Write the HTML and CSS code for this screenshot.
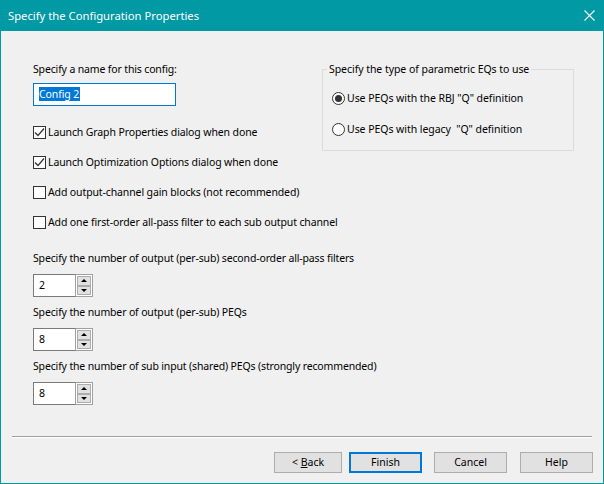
FILE: index.html
```html
<!DOCTYPE html>
<html lang="en">
<head>
    <meta charset="UTF-8">
    <meta name="viewport" content="width=device-width, initial-scale=1.0">
    <title>Specify the Configuration Properties</title>
    <link rel="stylesheet" href="styles.css">
</head>
<body>
    <div class="window">
        <div class="titlebar">
            <span class="title">Specify the Configuration Properties</span>
            <svg class="close" width="11" height="11" viewBox="0 0 11 11">
                <path d="M0.5 0.5 L10.5 10.5 M10.5 0.5 L0.5 10.5" stroke="#fff" stroke-width="1.1" fill="none"/>
            </svg>
        </div>

        <div class="content">
            <div class="top">
                <div class="left">
                    <div class="label">Specify a name for this config:</div>
                    <div class="name-box"><span class="selected">Config 2</span></div>

                    <div class="checks">
                        <div class="check">
                            <span class="box"><svg width="11" height="11" viewBox="0 0 11 11"><path d="M1 5.5 L4 8.5 L10 1.5" stroke="#333" stroke-width="1.2" fill="none"/></svg></span>
                            Launch Graph Properties dialog when done
                        </div>
                        <div class="check">
                            <span class="box"><svg width="11" height="11" viewBox="0 0 11 11"><path d="M1 5.5 L4 8.5 L10 1.5" stroke="#333" stroke-width="1.2" fill="none"/></svg></span>
                            Launch Optimization Options dialog when done
                        </div>
                        <div class="check">
                            <span class="box"></span>
                            Add output-channel gain blocks (not recommended)
                        </div>
                        <div class="check">
                            <span class="box"></span>
                            Add one first-order all-pass filter to each sub output channel
                        </div>
                    </div>
                </div>

                <fieldset class="group">
                    <legend>Specify the type of parametric EQs to use</legend>
                    <div class="radio"><span class="circle on"></span>Use PEQs with the RBJ "Q" definition</div>
                    <div class="radio"><span class="circle"></span>Use PEQs with legacy&nbsp; "Q" definition</div>
                </fieldset>
            </div>

            <div class="spins">
                <div class="spin-block">
                    <div class="label">Specify the number of output (per-sub) second-order all-pass filters</div>
                    <div class="spinner">
                        <div class="spin-edit">2</div>
                        <div class="spin-btns">
                            <span class="spin-btn"><span class="arrow up"></span></span>
                            <span class="spin-btn"><span class="arrow down"></span></span>
                        </div>
                    </div>
                </div>
                <div class="spin-block">
                    <div class="label">Specify the number of output (per-sub) PEQs</div>
                    <div class="spinner">
                        <div class="spin-edit">8</div>
                        <div class="spin-btns">
                            <span class="spin-btn"><span class="arrow up"></span></span>
                            <span class="spin-btn"><span class="arrow down"></span></span>
                        </div>
                    </div>
                </div>
                <div class="spin-block">
                    <div class="label">Specify the number of sub input (shared) PEQs (strongly recommended)</div>
                    <div class="spinner">
                        <div class="spin-edit">8</div>
                        <div class="spin-btns">
                            <span class="spin-btn"><span class="arrow up"></span></span>
                            <span class="spin-btn"><span class="arrow down"></span></span>
                        </div>
                    </div>
                </div>
            </div>

            <div class="separator"></div>

            <div class="buttons">
                <button class="btn back">&lt; <u>B</u>ack</button>
                <button class="btn finish">Finish</button>
                <button class="btn cancel">Cancel</button>
                <button class="btn help">Help</button>
            </div>
        </div>
    </div>
</body>
</html>
```

FILE: styles.css
```css
* {
    box-sizing: border-box;
    margin: 0;
    padding: 0;
}

body {
    font-family: "Noto Sans", "Open Sans", sans-serif;
    font-size: 10.5px;
    color: #000;
    background-color: #f0f0f0;
}

.window {
    width: 604px;
    height: 484px;
    border: 1px solid #0099a4;
    border-top: none;
    background-color: #f0f0f0;
    display: flex;
    flex-direction: column;
}

.titlebar {
    height: 31px;
    background-color: #0099a4;
    display: flex;
    justify-content: space-between;
    align-items: center;
    padding-left: 8px;
    padding-right: 9px;
    margin: 0 -1px;
}

.title {
    color: #fff;
    font-size: 11.25px;
    line-height: 15px;
}

.close {
    display: block;
    margin-top: -1px;
}

.label {
    line-height: 15px;
    white-space: nowrap;
    letter-spacing: -0.15px;
}

/* 上部 */
.top {
    display: flex;
    padding: 31px 0 0 32px;
}

.left {
    width: 289px;
}

.name-box {
    width: 143px;
    height: 23px;
    margin-top: 6px;
    border: 1px solid #0078d7;
    background-color: #fff;
    padding: 3px 0 0 5px;
    line-height: 14px;
    letter-spacing: -0.1px;
}

.selected {
    display: inline-block;
    background-color: #0078d7;
    color: #fff;
    padding-right: 1px;
}

.checks {
    margin-top: 11px;
}

.check {
    height: 30px;
    display: flex;
    align-items: center;
    white-space: nowrap;
    letter-spacing: -0.12px;
}

.box {
    flex-shrink: 0;
    width: 13px;
    height: 13px;
    border: 1px solid #333;
    background-color: #fff;
    margin-right: 2px;
    display: flex;
    align-items: center;
    justify-content: center;
}

.box svg {
    display: block;
}

.group {
    flex-shrink: 0;
    width: 252px;
    height: 89px;
    border: 1px solid #dcdcdc;
    padding: 13px 8px 0 9px;
    align-self: flex-start;
    letter-spacing: -0.05px;
}

.group legend {
    line-height: 15px;
    padding: 0 2px;
    margin-left: -5px;
}

.radio {
    height: 16px;
    display: flex;
    align-items: center;
    white-space: nowrap;
    margin-bottom: 15px;
}

.circle {
    flex-shrink: 0;
    width: 13px;
    height: 13px;
    border: 1px solid #333;
    border-radius: 50%;
    background-color: #fff;
    margin-right: 2px;
    display: flex;
    align-items: center;
    justify-content: center;
}

.circle.on::after {
    content: "";
    width: 7px;
    height: 7px;
    border-radius: 50%;
    background-color: #333;
}

/* スピンボックス */
.spins {
    margin-top: 14px;
    padding-left: 32px;
}

.spin-block {
    margin-bottom: 8px;
}

.spinner {
    display: flex;
    margin-top: 8px;
    height: 23px;
}

.spin-edit {
    width: 43px;
    height: 23px;
    border: 1px solid #7a7a7a;
    border-right: 1px solid #a0a0a0;
    background-color: #fff;
    padding-left: 5px;
    line-height: 21px;
}

.spin-btns {
    width: 17px;
    height: 23px;
    display: flex;
    flex-direction: column;
    justify-content: space-between;
    padding: 1px 0;
    border-top: 1px solid #a0a0a0;
    border-bottom: 1px solid #a0a0a0;
    border-right: 1px solid #a0a0a0;
    background-color: #fff;
}

.spin-btn {
    height: 10px;
    margin: 0 1px;
    border: 1px solid #adadad;
    background-color: #e1e1e1;
    display: flex;
    align-items: center;
    justify-content: center;
}

.arrow {
    width: 0;
    height: 0;
    border-left: 3px solid transparent;
    border-right: 3px solid transparent;
}

.arrow.up {
    border-bottom: 3px solid #000;
}

.arrow.down {
    border-top: 3px solid #000;
}

/* 下部 */
.separator {
    margin: 31px 11px 0 11px;
    border-top: 1px solid #a0a0a0;
    border-bottom: 1px solid #fff;
}

.buttons {
    display: flex;
    justify-content: flex-end;
    margin-top: 14px;
    padding-right: 10px;
}

.btn {
    width: 73px;
    height: 21px;
    font-family: "Noto Sans", "Open Sans", sans-serif;
    font-size: 10.5px;
    color: #000;
    background-color: #e1e1e1;
    border: 1px solid #adadad;
    line-height: 17px;
}

.back {
    width: 68px;
}

.finish {
    border: 2px solid #0078d7;
    margin-left: 7px;
}

.cancel {
    margin-left: 12px;
}

.help {
    margin-left: 13px;
}
```
